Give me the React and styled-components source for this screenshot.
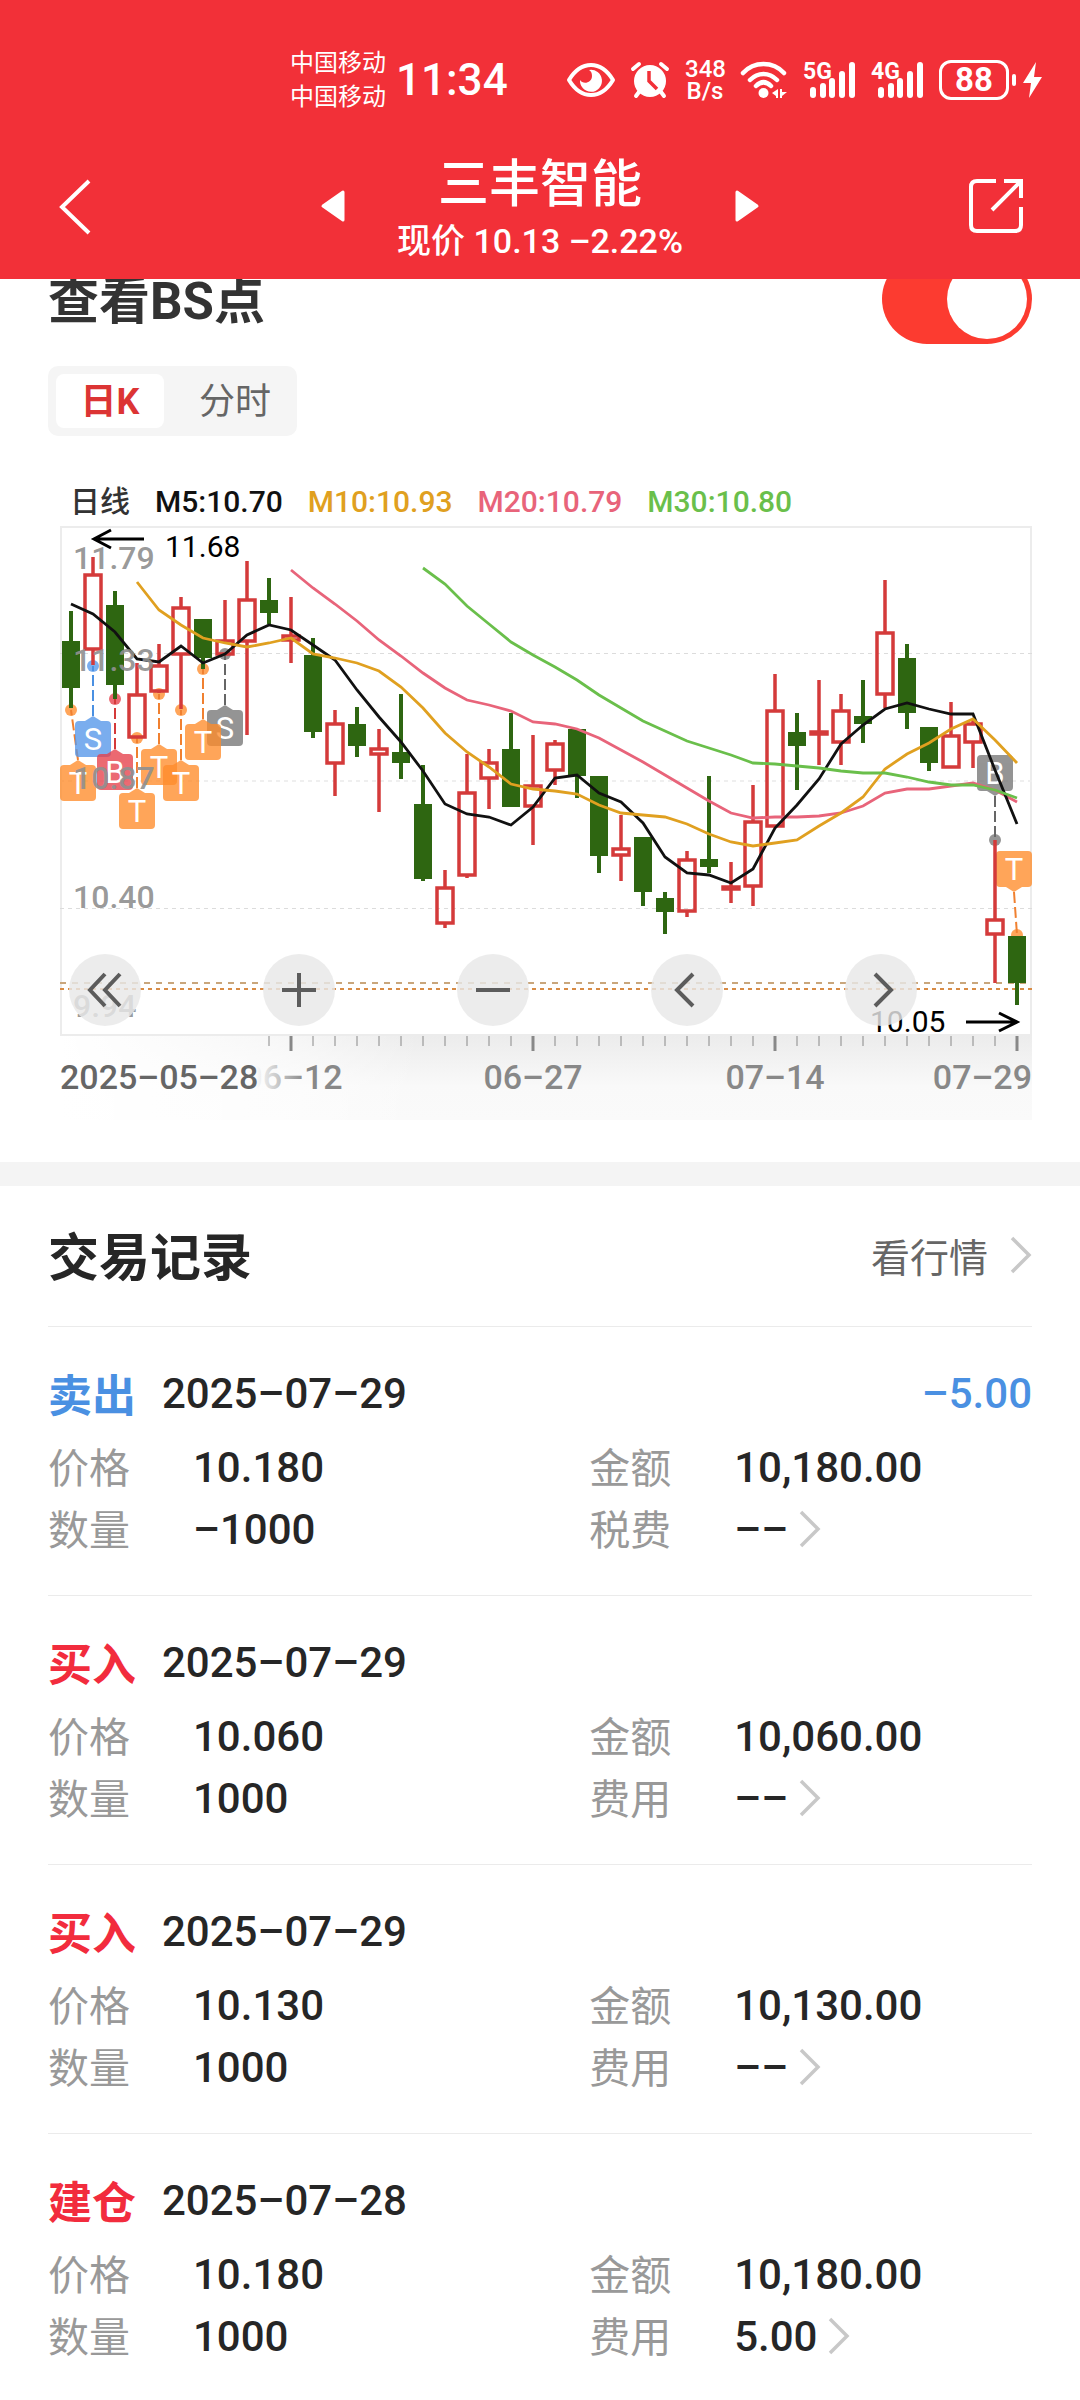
import React, { useState } from 'react';
import styled, { createGlobalStyle } from 'styled-components';

const RED = '#d43a3a';
const GREEN = '#2e6611';
const STEP = 22;

const GlobalStyle = createGlobalStyle`
  * { box-sizing: border-box; }
  body {
    margin: 0;
    background: #fff;
    color: #262626;
    font-family: Roboto, 'Noto Sans CJK SC', sans-serif;
  }
  button {
    margin: 0;
    padding: 0;
    border: 0;
    background: none;
    color: inherit;
    font-family: inherit;
    cursor: pointer;
  }
  svg { display: block; flex: none; overflow: visible; }
  h1, h2, p, dl, dd { margin: 0; }
`;

const Header = styled.header`
  position: sticky;
  top: 0;
  z-index: 2;
  background: #f23038;
  color: #fff;
`;

const StatusBar = styled.div`
  display: flex;
  align-items: center;
  height: 132px;
  padding: 28px 38px 0 290px;
`;

const Carriers = styled.div`
  font-size: 24px;
  line-height: 34px;
  margin-right: 10px;
`;

const Clock = styled.time`
  font-size: 44px;
  font-weight: 500;
`;

const StatusIcons = styled.div`
  display: flex;
  align-items: center;
  gap: 16px;
  margin-left: auto;
`;

const NetSpeed = styled.div`
  width: 40px;
  font-size: 24px;
  font-weight: 500;
  line-height: 22px;
  text-align: center;
`;

const Battery = styled.div`
  display: flex;
  align-items: center;
  gap: 3px;
`;

const BatteryLevel = styled.span`
  width: 70px;
  height: 40px;
  border: 3px solid #fff;
  border-radius: 12px;
  font-size: 33px;
  font-weight: 700;
  line-height: 34px;
  text-align: center;
`;

const BatteryTip = styled.span`
  width: 4px;
  height: 12px;
  margin-right: 4px;
  border-radius: 2px;
  background: #fff;
`;

const NavBar = styled.div`
  display: grid;
  grid-template-columns: 1fr auto 1fr;
  align-items: center;
  justify-items: start;
  height: 147px;
  padding: 0 56px;
  > :last-child { justify-self: end; }
`;

const StockSwitch = styled.div`
  display: flex;
  align-items: center;
  justify-content: space-between;
  width: 438px;
`;

const StockInfo = styled.div`
  padding-top: 9px;
  text-align: center;
  white-space: nowrap;
`;

const StockName = styled.h1`
  font-size: 51px;
  font-weight: 500;
  line-height: 62px;
`;

const StockPrice = styled.p`
  font-size: 34px;
  font-weight: 500;
  line-height: 50px;
`;

const Section = styled.section`
  padding: 0 48px;
`;

// scrolled a little way under the header
const BsRow = styled.label`
  display: flex;
  align-items: center;
  justify-content: space-between;
  height: 90px;
  margin-top: -25px;
  font-size: 51px;
  font-weight: 700;
  color: #333;
  span { padding-bottom: 4px; }
`;

const Switch = styled.input`
  appearance: none;
  display: flex;
  width: 150px;
  height: 90px;
  margin: 0;
  padding: 5px;
  border-radius: 45px;
  background: #ccc;
  &:checked {
    justify-content: flex-end;
    background: #fc3b30;
  }
  &::before {
    content: '';
    width: 80px;
    height: 80px;
    border-radius: 50%;
    background: #fff;
  }
`;

const Tabs = styled.div`
  display: inline-flex;
  gap: 17px;
  margin-top: 22px;
  padding: 8px;
  border-radius: 10px;
  background: #f5f5f5;
`;

const Tab = styled.button`
  width: 108px;
  height: 54px;
  border-radius: 8px;
  font-size: 36px;
  line-height: 56px;
  font-weight: ${({ $active }) => ($active ? 700 : 400)};
  color: ${({ $active }) => ($active ? '#dc3434' : '#666')};
  background: ${({ $active }) => ($active ? '#fff' : 'none')};
`;

const Legend = styled.div`
  display: flex;
  gap: 25px;
  margin-top: 42px;
  padding-left: 22px;
  font-size: 30px;
  font-weight: 500;
  line-height: 48px;
`;

const LegendItem = styled.span`
  color: ${({ $color }) => $color};
`;

const ChartBox = styled.div`
  position: relative;
  margin: 0 0 42px 12px;
  svg.chart { width: 100%; height: auto; }
`;

const ChartControls = styled.div`
  position: absolute;
  top: 72%;
  left: 0;
  right: 0;
  display: flex;
  justify-content: space-between;
  padding: 0 115px 0 9px;
`;

const RoundButton = styled.button`
  display: grid;
  place-items: center;
  width: 72px;
  height: 72px;
  border-radius: 50%;
  background: rgba(232, 232, 232, 0.82);
`;

const Divider = styled.div`
  height: 24px;
  background: #f4f4f4;
`;

const SectionHead = styled.div`
  display: flex;
  align-items: center;
  justify-content: space-between;
  height: 140px;
`;

const SectionTitle = styled.h2`
  padding-bottom: 4px;
  font-size: 51px;
  font-weight: 700;
`;

const MoreLink = styled.a`
  display: flex;
  align-items: center;
  gap: 22px;
  padding-bottom: 3px;
  font-size: 39px;
  color: #666;
  text-decoration: none;
`;

const Record = styled.article`
  padding: 36px 0 35px;
  border-top: 1px solid #ebebeb;
  &:last-child { padding-bottom: 30px; }
`;

const RecordHead = styled.div`
  display: flex;
  align-items: center;
  height: 60px;
  margin-bottom: 13px;
  font-size: 42px;
  font-weight: 500;
`;

const Side = styled.strong`
  margin-right: 26px;
  font-size: 44px;
  font-weight: 700;
  color: ${({ $sell }) => ($sell ? '#4a90e2' : '#f22c3d')};
`;

const Profit = styled.span`
  margin-left: auto;
  color: #4a90e2;
`;

const Fields = styled.dl`
  display: grid;
  grid-template-columns: 55% 45%;
`;

const Field = styled.div`
  display: flex;
  align-items: center;
  height: 62px;
  dt {
    width: 145px;
    padding-bottom: 4px;
    font-size: 41px;
    color: #999;
  }
  dd {
    display: flex;
    align-items: center;
    gap: 11px;
    font-size: 42px;
    font-weight: 500;
  }
`;

// colour, high, body top, body bottom, low, in chart units
const candles = [
  ['g', 85, 115, 162, 182], ['r', 31, 49, 123, 139], ['g', 65, 79, 159, 173], ['r', 137, 169, 211, 212],
  ['r', 118, 140, 165, 167], ['r', 71, 82, 128, 183], ['g', 93, 93, 132, 143], ['r', 74, 115, 128, 128],
  ['r', 35, 74, 115, 209], ['g', 52, 74, 87, 98], ['r', 71, 110, 114, 137], ['g', 112, 129, 206, 212],
  ['r', 184, 198, 237, 270], ['g', 181, 198, 220, 231], ['r', 203, 223, 228, 286], ['g', 168, 226, 237, 253],
  ['g', 239, 278, 353, 355], ['r', 344, 362, 397, 402], ['r', 228, 267, 349, 352], ['r', 223, 237, 252, 283],
  ['g', 187, 223, 281, 281], ['r', 209, 260, 280, 319], ['r', 214, 218, 244, 259], ['g', 203, 203, 250, 272],
  ['g', 250, 250, 330, 347], ['r', 289, 323, 329, 355], ['g', 311, 311, 366, 380], ['g', 366, 372, 386, 408],
  ['r', 325, 334, 385, 391], ['g', 250, 333, 341, 347], ['r', 336, 361, 363, 377], ['r', 259, 296, 360, 380],
  ['r', 148, 185, 300, 301], ['g', 187, 206, 220, 264], ['r', 154, 206, 208, 239], ['r', 168, 185, 216, 239],
  ['g', 154, 190, 198, 217], ['r', 54, 107, 168, 182], ['g', 118, 132, 187, 203], ['g', 201, 201, 237, 245],
  ['r', 176, 210, 241, 241], ['r', 194, 198, 216, 242], ['r', 314, 394, 408, 457], ['g', 410, 410, 457, 479],
];

const averages = [
  { color: '#e8647a', from: 10, ys: [44, 62, 78, 95, 114, 130, 147, 162, 174, 179, 185, 196, 198, 203, 212, 224, 236, 249, 262, 275, 287, 292, 291, 291, 290, 287, 280, 267, 263, 263, 260, 257, 264, 276] },
  { color: '#111', from: 0, ys: [78, 88, 106, 133, 136, 120, 137, 128, 109, 99, 104, 119, 134, 164, 191, 216, 245, 278, 288, 291, 299, 281, 252, 249, 267, 276, 297, 331, 347, 349, 357, 343, 302, 279, 253, 218, 199, 183, 177, 183, 188, 188, 244, 298] },
  { color: '#e0a020', from: 3, ys: [56, 84, 99, 112, 117, 121, 117, 112, 128, 132, 137, 145, 161, 182, 207, 226, 241, 258, 263, 265, 268, 279, 287, 289, 291, 298, 308, 316, 320, 317, 314, 300, 287, 271, 243, 228, 217, 203, 193, 214, 237] },
  { color: '#6abf4b', from: 16, ys: [42, 58, 80, 98, 116, 129, 141, 154, 169, 182, 195, 205, 215, 222, 229, 237, 238, 240, 242, 245, 247, 247, 251, 256, 259, 259, 264, 272] },
];

const ORANGE = { fill: '#ff8c2b', line: '#f08030' };
const BLUE = { fill: '#5597ea', line: '#4a90e2' };
const ROSE = { fill: '#e6404a', line: '#d43a3a' };
const GRAY = { fill: '#777', line: '#666' };

// i: candle, dot: anchor height, x: centre of the tag, y: its top
const tags = [
  { i: 0, dot: 184, x: 18, y: 239, text: 'T', tone: ORANGE },
  { i: 1, dot: 140, x: 33, y: 195, text: 'S', tone: BLUE },
  { i: 2, dot: 173, x: 55, y: 228, text: 'B', tone: ROSE },
  { i: 3, dot: 212, x: 77, y: 267, text: 'T', tone: ORANGE },
  { i: 4, dot: 168, x: 99, y: 223, text: 'T', tone: ORANGE },
  { i: 5, dot: 184, x: 121, y: 239, text: 'T', tone: ORANGE },
  { i: 7, dot: 128, x: 165, y: 184, text: 'S', tone: GRAY },
  { i: 6, dot: 143, x: 143, y: 198, text: 'T', tone: ORANGE },
  { i: 42, dot: 314, x: 935, y: 229, text: 'B', tone: GRAY, above: true },
  { i: 43, dot: 409, x: 954, y: 325, text: 'T', tone: ORANGE, above: true },
];

const priceLabels = [['11.79', 43], ['11.33', 145], ['10.87', 263], ['10.40', 382], ['9.94', 491]];

const records = [
  { side: '卖出', sell: true, date: '2025–07–29', profit: '–5.00', price: '10.180', amount: '10,180.00', count: '–1000', feeName: '税费', fee: '––' },
  { side: '买入', date: '2025–07–29', price: '10.060', amount: '10,060.00', count: '1000', feeName: '费用', fee: '––' },
  { side: '买入', date: '2025–07–29', price: '10.130', amount: '10,130.00', count: '1000', feeName: '费用', fee: '––' },
  { side: '建仓', date: '2025–07–28', price: '10.180', amount: '10,180.00', count: '1000', feeName: '费用', fee: '5.00' },
];

const cx = (i) => 11 + STEP * i;

const Candle = ({ i, data: [kind, high, top, bottom, low] }) => {
  const x = cx(i);
  if (kind === 'g') {
    return (
      <g fill={GREEN}>
        <rect x={x - 2} y={high} width="4" height={low - high} />
        <rect x={x - 9} y={top} width="18" height={bottom - top} />
      </g>
    );
  }
  return (
    <g fill="none" stroke={RED} strokeWidth="3.5">
      <path d={`M${x} ${high}V${top}M${x} ${bottom}V${low}`} />
      <rect x={x - 8} y={top} width="16" height={bottom - top} />
    </g>
  );
};

const Tag = ({ i, dot, x, y, text, tone, above }) => {
  const tip = above ? y + 41 : y - 5;
  const base = above ? y + 36 : y;
  return (
    <g>
      <circle cx={cx(i)} cy={dot} r="6" fill={tone.fill} opacity="0.78" />
      <path d={`M${x} ${tip}L${cx(i)} ${dot}`} stroke={tone.line} strokeWidth="2" strokeDasharray="11 4" />
      <g fill={tone.fill} opacity="0.78">
        <rect x={x - 18} y={y} width="36" height="36" rx="4" />
        <path d={`M${x - 8} ${base}L${x} ${tip}L${x + 8} ${base}Z`} />
      </g>
      <text x={x} y={y + 29} fontSize="31" fill="#fff" textAnchor="middle">{text}</text>
    </g>
  );
};

const Chart = () => (
  <svg className="chart" viewBox="0 0 972 594">
    <defs>
      <linearGradient id="axisDown" x1="0" y1="0" x2="0" y2="1">
        <stop offset="0" stopColor="#ececec" />
        <stop offset="0.6" stopColor="#f9f9f9" />
        <stop offset="1" stopColor="#fafafa" />
      </linearGradient>
      <linearGradient id="axisLeft">
        <stop offset="0" stopColor="#fff" />
        <stop offset="0.6" stopColor="#fff" stopOpacity="0.6" />
        <stop offset="1" stopColor="#fff" stopOpacity="0" />
      </linearGradient>
      <linearGradient id="dateFade" gradientUnits="userSpaceOnUse" x1="196" y1="0" x2="245" y2="0">
        <stop offset="0" stopColor="#888" stopOpacity="0" />
        <stop offset="1" stopColor="#888" />
      </linearGradient>
    </defs>

    <rect x="0" y="510" width="972" height="84" fill="url(#axisDown)" />
    <rect x="0" y="510" width="360" height="84" fill="url(#axisLeft)" />
    <rect x="1" y="1" width="970" height="508" fill="none" stroke="#ececec" strokeWidth="2" />
    <g stroke="#dcdcdc" strokeDasharray="4 4">
      <path d="M0 127.5H972M0 382.5H972" />
      <path d="M0 255H972" stroke="#efefef" strokeWidth="2" />
    </g>
    <path d="M0 457H972" stroke="#c9a67c" strokeWidth="2" strokeDasharray="6 6" />
    <path d="M0 463H972" stroke="#d88b45" strokeWidth="2" strokeDasharray="4 4" />

    {tags.map((tag) => <Tag key={tag.i} {...tag} />)}
    {candles.map((data, i) => <Candle key={i} i={i} data={data} />)}
    {averages.map(({ color, from, ys }) => (
      <polyline
        key={color}
        fill="none"
        stroke={color}
        strokeWidth="2.8"
        points={ys.map((y, n) => `${cx(from + n)},${y}`).join(' ')}
      />
    ))}

    <g fontSize="32" fontWeight="500" fill="#909090" fillOpacity="0.92">
      {priceLabels.map(([text, y]) => <text key={text} x="13" y={y}>{text}</text>)}
    </g>
    <g fill="none" stroke="#000" strokeWidth="3">
      <path d="M84 13H34M51 4L34 13L51 22" />
      <path d="M906 496H957M939 487L957 496L939 505" />
    </g>
    <g fontSize="30" fill="#000">
      <text x="105" y="31">11.68</text>
      <text x="810" y="506">10.05</text>
    </g>

    {candles.map((_, i) => {
      if (i < 9) return null;
      const major = i % 11 === 10;
      return <path key={i} d={`M${cx(i)} 510v${major ? 15 : 10}`} stroke="#888" strokeWidth={major ? 3 : 1} />;
    })}
    <g fontSize="34" fontWeight="500" fill="#888">
      <text x="0" y="563" fill="#666">2025–05–28</text>
      <text x="233" y="563" textAnchor="middle" fill="url(#dateFade)">06–12</text>
      <text x="473" y="563" textAnchor="middle">06–27</text>
      <text x="715" y="563" textAnchor="middle">07–14</text>
      <text x="972" y="563" textAnchor="end">07–29</text>
    </g>
  </svg>
);

const ControlIcon = ({ d }) => (
  <svg width="36" height="36" fill="none" stroke="#5c5c5c" strokeWidth="4">
    <path d={d} />
  </svg>
);

const Chevron = () => (
  <svg width="22" height="36" fill="none" stroke="#c8c8c8" strokeWidth="3.5">
    <path d="M2 1L19 18L2 35" />
  </svg>
);

const Signal = ({ label }) => (
  <svg width="52" height="38" viewBox="0 0 52 38" fill="#fff">
    <text x="0" y="18" fontSize="23" fontWeight="700">{label}</text>
    <rect x="7" y="26" width="6" height="11" rx="3" />
    <rect x="17" y="22" width="6" height="15" rx="3" />
    <rect x="26" y="17" width="6" height="20" rx="3" />
    <rect x="36" y="10" width="6" height="27" rx="3" />
    <rect x="46" y="1" width="6" height="36" rx="3" />
  </svg>
);

const controls = [
  ['最早', 'M18 2L3 18L18 34M33 2L18 18L33 34'],
  ['放大', 'M1 18H35M18 1V35'],
  ['缩小', 'M1 18H35'],
  ['向前', 'M24 2L8 18L24 34'],
  ['向后', 'M12 2L28 18L12 34'],
];

export default () => {
  const [showBs, setShowBs] = useState(true);
  const [tab, setTab] = useState('日K');

  return (
    <>
      <GlobalStyle />
      <Header>
        <StatusBar>
          <Carriers>中国移动<br />中国移动</Carriers>
          <Clock>11:34</Clock>
          <StatusIcons>
            <svg width="48" height="34" viewBox="0 0 48 34">
              <path d="M2 17C14-3 34-3 46 17C34 37 14 37 2 17Z" fill="none" stroke="#fff" strokeWidth="4" strokeLinejoin="round" />
              <path d="M22 7A11 11 0 1 1 13 17C16 22 25 20 25 13C25 10 24 8 22 7Z" fill="#fff" />
            </svg>
            <svg width="38" height="38" viewBox="0 0 38 38">
              <circle cx="19" cy="20" r="16" fill="#fff" />
              <path d="M2 8L8 3M36 8L30 3M8 31L5 35M30 31L33 35" stroke="#fff" strokeWidth="4" strokeLinecap="round" />
              <path d="M18 10V20L26 28" fill="none" stroke="#f23038" strokeWidth="3.5" />
            </svg>
            <NetSpeed>348<br />B/s</NetSpeed>
            <svg width="46" height="38" viewBox="0 0 46 38">
              <path d="M2 12C13 0 32 0 43 12M9 19C17 11 28 11 36 19M15 25C20 20 25 20 30 25" fill="none" stroke="#fff" strokeWidth="4.5" strokeLinecap="round" />
              <circle cx="22.5" cy="32" r="5" fill="#fff" />
              <path d="M37 28V37H35V35L31 32ZM39 28V37H41V35L46 31H41V28Z" fill="#fff" />
            </svg>
            <Signal label="5G" />
            <Signal label="4G" />
            <Battery>
              <BatteryLevel>88</BatteryLevel>
              <BatteryTip />
              <svg width="19" height="38" viewBox="0 0 19 38" fill="#fff">
                <path d="M13 1L0 22H8L6 37L19 16H11Z" />
              </svg>
            </Battery>
          </StatusIcons>
        </StatusBar>
        <NavBar>
          <button aria-label="返回">
            <svg width="36" height="56" fill="none" stroke="#fff" strokeWidth="4">
              <path d="M33 3L6 29L33 55" />
            </svg>
          </button>
          <StockSwitch>
            <button aria-label="上一只">
              <svg width="24" height="32" fill="#fff" stroke="#fff" strokeWidth="3" strokeLinejoin="round">
                <path d="M2 16L22 2V30Z" />
              </svg>
            </button>
            <StockInfo>
              <StockName>三丰智能</StockName>
              <StockPrice>现价 10.13 –2.22%</StockPrice>
            </StockInfo>
            <button aria-label="下一只">
              <svg width="24" height="32" fill="#fff" stroke="#fff" strokeWidth="3" strokeLinejoin="round">
                <path d="M22 16L2 2V30Z" />
              </svg>
            </button>
          </StockSwitch>
          <button aria-label="分享">
            <svg width="56" height="56" fill="none" stroke="#fff" strokeWidth="4">
              <path d="M28 3H9Q3 3 3 9V47Q3 53 9 53H47Q53 53 53 47V29" />
              <path d="M36 3H53V20M53 3L24 32" />
            </svg>
          </button>
        </NavBar>
      </Header>

      <Section>
        <BsRow>
          <span>查看BS点</span>
          <Switch type="checkbox" checked={showBs} onChange={() => setShowBs(!showBs)} />
        </BsRow>
        <Tabs>
          {['日K', '分时'].map((name) => (
            <Tab key={name} $active={tab === name} onClick={() => setTab(name)}>{name}</Tab>
          ))}
        </Tabs>
        <Legend>
          <LegendItem $color="#333">日线</LegendItem>
          <LegendItem $color="#111">M5:10.70</LegendItem>
          <LegendItem $color="#e0a020">M10:10.93</LegendItem>
          <LegendItem $color="#e8647a">M20:10.79</LegendItem>
          <LegendItem $color="#6abf4b">M30:10.80</LegendItem>
        </Legend>
        <ChartBox>
          <Chart />
          <ChartControls>
            {controls.map(([name, d]) => (
              <RoundButton key={name} aria-label={name}><ControlIcon d={d} /></RoundButton>
            ))}
          </ChartControls>
        </ChartBox>
      </Section>

      <Divider />

      <Section>
        <SectionHead>
          <SectionTitle>交易记录</SectionTitle>
          <MoreLink href="#quote">看行情 <Chevron /></MoreLink>
        </SectionHead>
        {records.map((r, i) => (
          <Record key={i}>
            <RecordHead>
              <Side $sell={r.sell}>{r.side}</Side>
              <time>{r.date}</time>
              {r.profit && <Profit>{r.profit}</Profit>}
            </RecordHead>
            <Fields>
              <Field><dt>价格</dt><dd>{r.price}</dd></Field>
              <Field><dt>金额</dt><dd>{r.amount}</dd></Field>
              <Field><dt>数量</dt><dd>{r.count}</dd></Field>
              <Field><dt>{r.feeName}</dt><dd>{r.fee} <Chevron /></dd></Field>
            </Fields>
          </Record>
        ))}
      </Section>
    </>
  );
};
